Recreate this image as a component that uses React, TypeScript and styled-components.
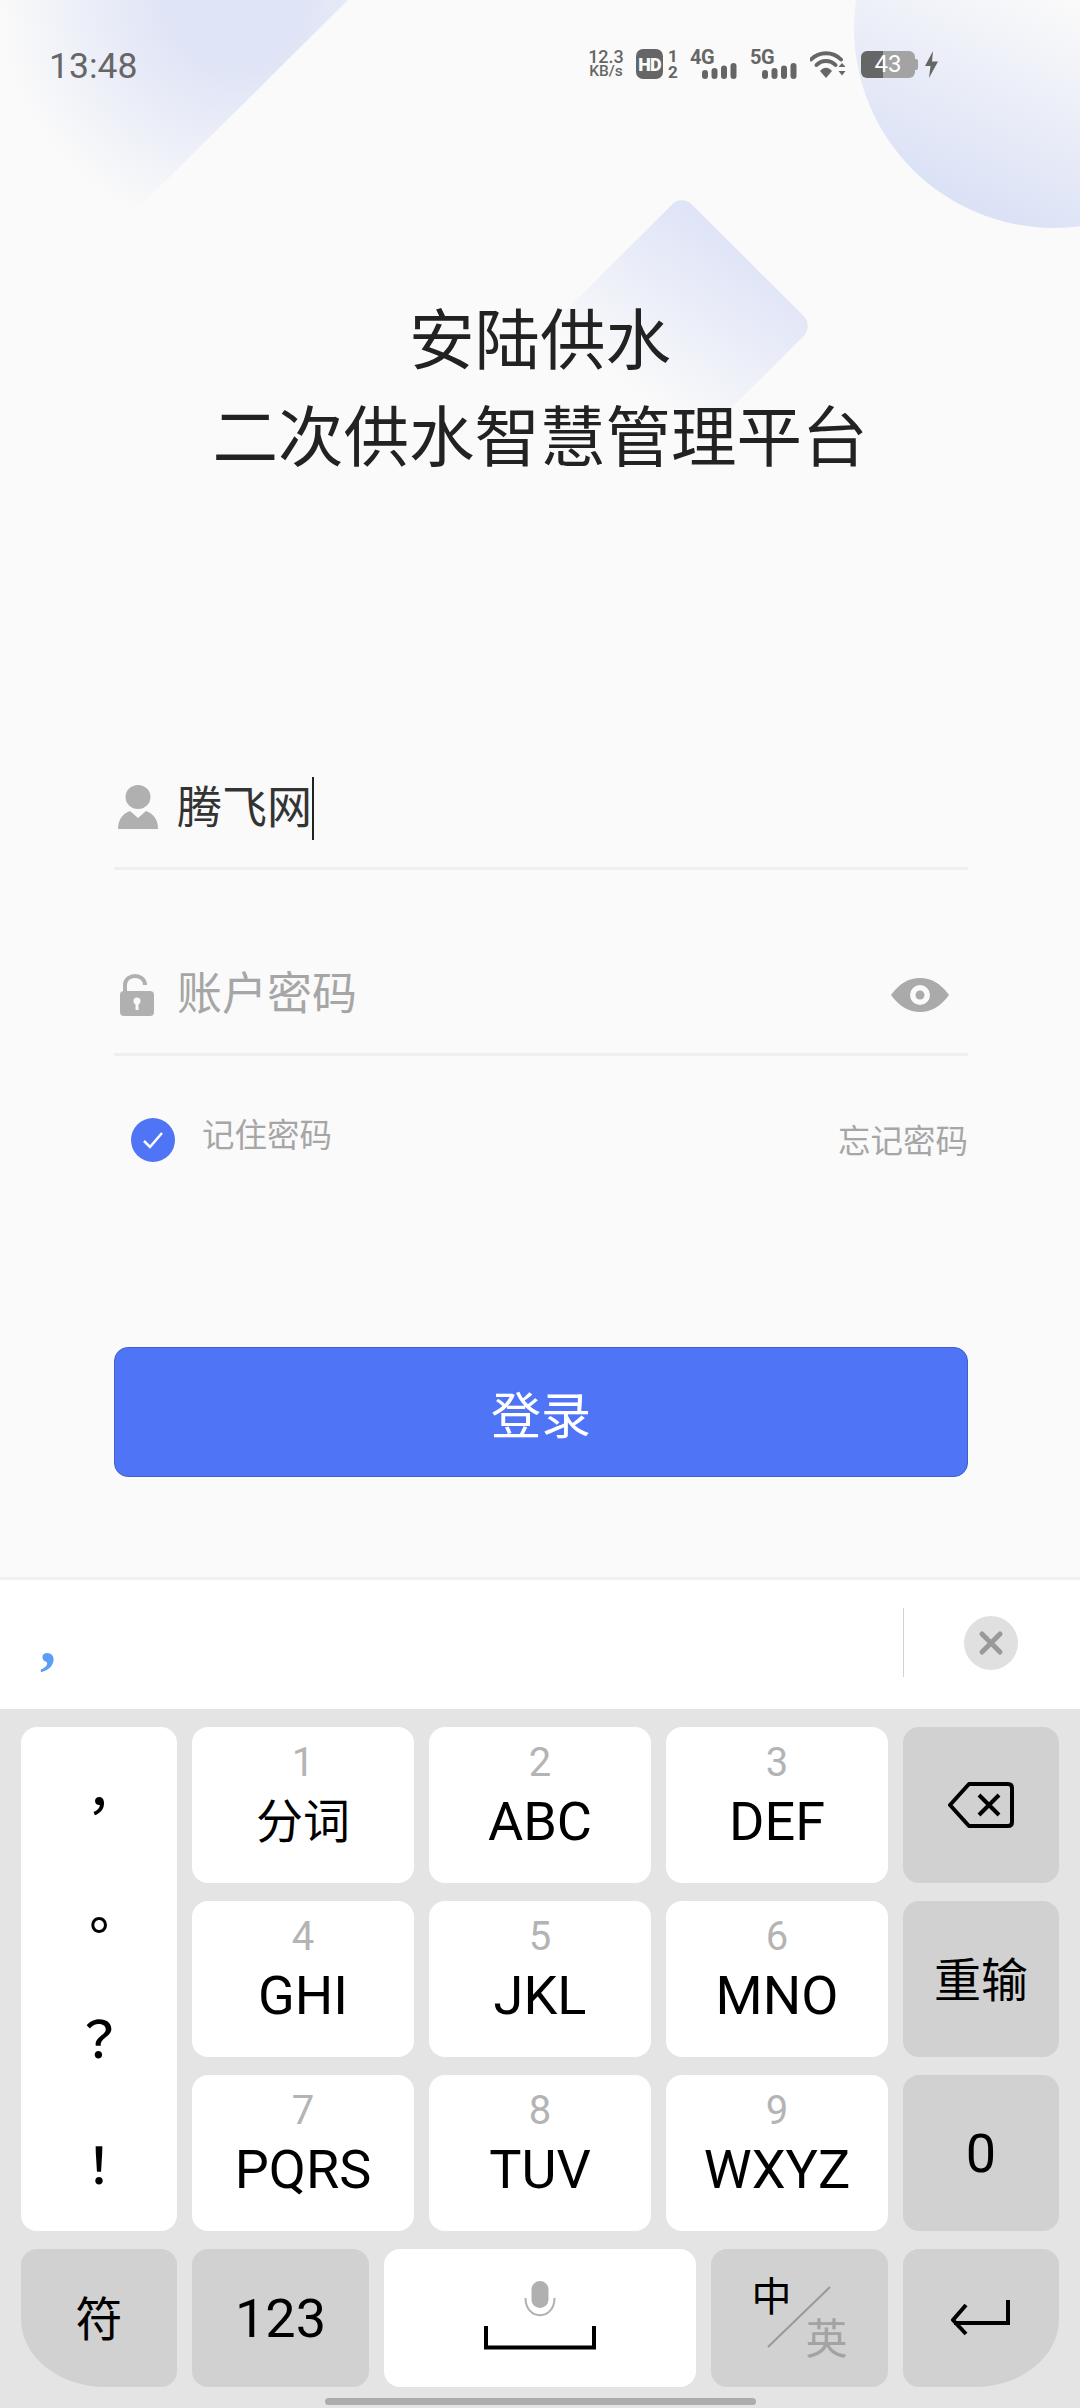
import React from "react";
import styled, { createGlobalStyle } from "styled-components";

const CJK = `Roboto, "Noto Sans CJK SC", sans-serif`;

const GlobalStyle = createGlobalStyle`
  html, body {
    margin: 0;
    padding: 0;
    background: #fafafa;
  }
  * {
    box-sizing: border-box;
  }
`;

const Page = styled.div`
  width: 1080px;
  height: 2408px;
  display: flex;
  flex-direction: column;
  overflow: hidden;
  font-family: ${CJK};
  background: #fafafa;
`;

const LoginScreen = styled.main`
  position: relative;
  flex: 1;
  overflow: hidden;
`;

/* background decoration */
const CornerShape = styled.div`
  position: absolute;
  left: 0;
  top: 0;
  width: 348px;
  height: 345px;
  clip-path: polygon(0 0, 100% 0, 0 100%);
  background: radial-gradient(circle 235px at 235px 0, #dfe4f6 28%, rgba(250, 250, 250, 0) 100%);
`;

const CircleShape = styled.div`
  position: absolute;
  left: 854px;
  top: -172px;
  width: 400px;
  height: 400px;
  border-radius: 50%;
  background: linear-gradient(25deg, #dce2f6 14%, #fafafa 56%);
`;

const DiamondShape = styled.div`
  position: absolute;
  left: 589px;
  top: 233px;
  width: 186px;
  height: 186px;
  border-radius: 14px;
  transform: rotate(45deg);
  background: linear-gradient(170deg, #dfe4f7 5%, rgba(250, 250, 250, 0) 88%);
`;

const Content = styled.div`
  position: relative;
  z-index: 1;
`;

/* status bar */
const StatusBar = styled.header`
  height: 128px;
  padding: 0 142px 0 49px;
  display: flex;
  align-items: center;
  justify-content: space-between;
  color: #666;
`;

const Clock = styled.span`
  padding-top: 3px;
  font-size: 35.5px;
  line-height: 40px;
  color: #666;
`;

const StatusIcons = styled.div`
  display: flex;
  align-items: center;
  height: 32px;
`;

const NetSpeed = styled.div`
  width: 36px;
  margin-right: 12px;
  margin-top: -2px;
  display: flex;
  flex-direction: column;
  align-items: center;
  font-weight: 500;
`;

const SpeedValue = styled.span`
  display: block;
  font-size: 18px;
  line-height: 16px;
`;

const SpeedUnit = styled.span`
  display: block;
  font-size: 15.5px;
  line-height: 13px;
`;

const HdBadge = styled.span`
  width: 27px;
  height: 30px;
  border-radius: 7px;
  background: #666;
  color: #fafafa;
  font-size: 18px;
  font-weight: 900;
  letter-spacing: -1px;
  display: flex;
  align-items: center;
  justify-content: center;
`;

const SimSlots = styled.span`
  width: 19px;
  margin-right: 8px;
  padding-left: 5px;
  display: flex;
  flex-direction: column;
  font-size: 17px;
  line-height: 16px;
  font-weight: 700;
`;

const Network = styled.div`
  position: relative;
  width: 47px;
  height: 30px;
  margin-right: 13px;
`;

const NetworkLabel = styled.span`
  position: absolute;
  left: 0;
  top: -1px;
  font-size: 20px;
  line-height: 18px;
  font-weight: 700;
  letter-spacing: -0.5px;
`;

const NetworkBars = styled.svg`
  position: absolute;
  right: 0;
  bottom: 0;
`;

const WifiIcon = styled.svg`
  margin-right: 15px;
`;

const Battery = styled.div`
  position: relative;
  width: 54px;
  height: 27px;
  border-radius: 6px;
  overflow: hidden;
  background: linear-gradient(90deg, #666 0 41%, #a3a3a3 41% 100%);
  color: #fff;
  font-size: 24px;
  line-height: 27px;
  text-align: center;
`;

const BatteryNub = styled.span`
  width: 3px;
  height: 11px;
  margin-right: 7px;
  border-radius: 0 2px 2px 0;
  background: #a3a3a3;
`;

/* title and form */
const Title = styled.h1`
  margin: 165px 0 0;
  font-size: 65.5px;
  line-height: 97px;
  font-weight: 400;
  color: #222;
  text-align: center;
`;

const Form = styled.form`
  margin-top: 197px;
  padding: 0 112px 0 114px;
`;

const Field = styled.div`
  height: 186px;
  padding: 66px 19px 0 4px;
  border-bottom: 3px solid #efeff2;
  display: flex;
  align-items: center;
  justify-content: space-between;
`;

const FieldMain = styled.div`
  display: flex;
  align-items: center;
`;

const FieldIcon = styled.svg<{ $lift?: number }>`
  width: 40px;
  margin-right: 19px;
  margin-top: ${(p) => -(p.$lift ?? 0)}px;
  flex: none;
`;

const FieldText = styled.span<{ $placeholder?: boolean }>`
  font-size: 45px;
  line-height: 63px;
  color: ${(p) => (p.$placeholder ? "#a6a6a6" : "#333")};
`;

const Caret = styled.span`
  width: 2px;
  height: 63px;
  background: #222;
`;

const Options = styled.div`
  margin-top: 62px;
  display: flex;
  align-items: flex-start;
  justify-content: space-between;
`;

const Remember = styled.label`
  padding-left: 17px;
  display: flex;
  align-items: flex-start;
  gap: 27px;
  font-size: 32.5px;
  line-height: 36px;
  color: #a6a6a6;
`;

const Check = styled.span`
  width: 44px;
  height: 44px;
  border-radius: 50%;
  background: #4f75f6;
  display: flex;
  align-items: center;
  justify-content: center;
`;

const Forgot = styled.a`
  font-size: 32.5px;
  line-height: 48px;
  color: #a6a6a6;
`;

const LoginButton = styled.button`
  display: block;
  width: 100%;
  height: 130px;
  margin-top: 181px;
  border: 1px solid #3f5fcc;
  border-radius: 14px;
  background: #4f75f6;
  color: #fff;
  font-family: inherit;
  font-size: 50px;
`;

/* keyboard */
const Keyboard = styled.section`
  flex: none;
  background: #e4e4e4;
`;

const CandidateBar = styled.div`
  height: 132px;
  border-top: 3px solid #f0f0f0;
  background: #fff;
  display: flex;
  align-items: flex-start;
  justify-content: space-between;
  padding: 25px 35px 0 40px;
`;

const Candidate = styled.span`
  font-family: "Liberation Serif", serif;
  font-size: 64px;
  line-height: 72px;
  font-weight: 700;
  color: #5b9ef6;
`;

const CandidateActions = styled.div`
  display: flex;
  align-items: flex-start;
  margin-top: 3px;
  margin-right: 27px;
`;

const Divider = styled.span`
  width: 1px;
  height: 69px;
  background: #d2d2d2;
`;

const CloseButton = styled.span`
  width: 54px;
  height: 54px;
  margin: 8px 0 0 60px;
  border-radius: 50%;
  background: #e0e0e0;
  display: flex;
  align-items: center;
  justify-content: center;
`;

const KeyGrid = styled.div`
  padding: 18px 21px 0;
  display: grid;
  grid-template-columns: 156px repeat(3, 222px) 156px;
  grid-template-rows: repeat(3, 156px);
  column-gap: 15px;
  row-gap: 18px;
`;

const BottomRow = styled.div`
  margin-top: 18px;
  padding: 0 21px;
  display: grid;
  grid-template-columns: 156px 177px 312px 177px 156px;
  grid-template-rows: 138px;
  column-gap: 15px;
`;

const Key = styled.div<{ $gray?: boolean; $corner?: "left" | "right" }>`
  border-radius: 16px;
  background: ${(p) => (p.$gray ? "#d1d1d1" : "#fff")};
  color: #000;
  display: flex;
  align-items: center;
  justify-content: center;
  font-size: 54px;
  ${(p) => p.$corner === "left" && "border-bottom-left-radius: 84px 68px;"}
  ${(p) => p.$corner === "right" && "border-bottom-right-radius: 84px 68px;"}
`;

const PunctuationKey = styled(Key)`
  grid-row: 1 / span 3;
  grid-column: 1;
  padding: 15px 0 9px;
  flex-direction: column;
  font-family: "Noto Sans CJK TC", sans-serif;
  font-size: 50px;
  font-weight: 500;
`;

const Punct = styled.span<{ $lift?: number }>`
  height: 120px;
  line-height: 120px;
  margin-top: ${(p) => -(p.$lift ?? 0)}px;
  margin-bottom: ${(p) => p.$lift ?? 0}px;
`;

const DigitKey = styled(Key)`
  flex-direction: column;
  justify-content: flex-start;
  padding-top: 16px;
`;

const Digit = styled.span`
  font-size: 40px;
  line-height: 40px;
  color: #b4b4b4;
`;

const Letters = styled.span<{ $cjk?: boolean }>`
  margin-top: 10px;
  line-height: 58px;
  font-size: ${(p) => (p.$cjk ? 47 : 54)}px;
`;

const CjkLabel = styled.span`
  font-size: 47px;
  margin-top: -6px;
`;

const LangKey = styled(Key)`
  position: relative;
  padding: 27px 0 24px;
  gap: 14px;
`;

const LangMain = styled.span`
  align-self: flex-start;
  font-size: 40px;
  line-height: 44px;
`;

const LangOther = styled.span`
  align-self: flex-end;
  font-size: 42px;
  line-height: 46px;
  color: #a3a3a3;
`;

const LangSlash = styled.svg`
  position: absolute;
  left: 56px;
  top: 37px;
`;

const SpaceIcon = styled.svg`
  margin-bottom: 5px;
`;

const HomeIndicator = styled.div`
  width: 431px;
  height: 7px;
  margin: 11px auto 3px;
  border-radius: 4px;
  background: #adadad;
`;

const digitKeys = [
  { digit: "1", label: "分词", cjk: true },
  { digit: "2", label: "ABC" },
  { digit: "3", label: "DEF" },
  { digit: "4", label: "GHI" },
  { digit: "5", label: "JKL" },
  { digit: "6", label: "MNO" },
  { digit: "7", label: "PQRS" },
  { digit: "8", label: "TUV" },
  { digit: "9", label: "WXYZ" },
];

const SignalBars = () => (
  <NetworkBars width="35" height="16" viewBox="0 0 35 16" fill="#666">
    <rect x="0" y="7" width="6" height="9" rx="3" />
    <rect x="9.5" y="5" width="6" height="11" rx="3" />
    <rect x="19" y="2.5" width="6" height="13.5" rx="3" />
    <rect x="28.5" y="0" width="6" height="16" rx="3" />
  </NetworkBars>
);

const renderDigitKey = (k: { digit: string; label: string; cjk?: boolean }) => (
  <DigitKey key={k.digit}>
    <Digit>{k.digit}</Digit>
    <Letters $cjk={k.cjk}>{k.label}</Letters>
  </DigitKey>
);

const App: React.FC = () => {
  return (
    <Page>
      <GlobalStyle />
      <LoginScreen>
        <CornerShape />
        <CircleShape />
        <DiamondShape />
        <Content>
          <StatusBar>
            <Clock>13:48</Clock>
            <StatusIcons>
              <NetSpeed>
                <SpeedValue>12.3</SpeedValue>
                <SpeedUnit>KB/s</SpeedUnit>
              </NetSpeed>
              <HdBadge>HD</HdBadge>
              <SimSlots>
                <span>1</span>
                <span>2</span>
              </SimSlots>
              <Network>
                <NetworkLabel>4G</NetworkLabel>
                <SignalBars />
              </Network>
              <Network>
                <NetworkLabel>5G</NetworkLabel>
                <SignalBars />
              </Network>
              <WifiIcon width="36" height="28" viewBox="0 0 36 28">
                <path d="M1 9.500 C9 1 23 1 31 9.500" fill="none" stroke="#666" strokeWidth="4" strokeLinecap="round" />
                <path d="M6.500 15 C11.500 9.500 20.500 9.500 25.500 15" fill="none" stroke="#666" strokeWidth="4" strokeLinecap="round" />
                <path d="M10 21 C13.500 16.500 18.500 16.500 22 21 L16 28 Z" fill="#666" />
                <path d="M28.500 17 L32 13 L35.500 17 Z M28.500 21 L35.500 21 L32 25.500 Z" fill="#666" />
              </WifiIcon>
              <Battery>43</Battery>
              <BatteryNub />
              <svg width="13" height="27" viewBox="0 0 13 27" fill="#666">
                <path d="M8 0 L0 15 L5.500 15 L4 27 L13 10.500 L7 10.500 Z" />
              </svg>
            </StatusIcons>
          </StatusBar>

          <Title>
            安陆供水
            <br />
            二次供水智慧管理平台
          </Title>

          <Form>
            <Field>
              <FieldMain>
                <FieldIcon $lift={4} height="44" viewBox="0 0 40 44" fill="#b0b0b0">
                  <ellipse cx="20" cy="12" rx="12.500" ry="12" />
                  <path d="M0 44 C0 35 4 29 12 26 L20 33 L28 26 C36 29 40 35 40 44 Z" />
                </FieldIcon>
                <FieldText>腾飞网</FieldText>
                <Caret />
              </FieldMain>
            </Field>
            <Field>
              <FieldMain>
                <FieldIcon height="42" viewBox="0 0 40 42">
                  <path d="M7 19 V11 C7 -1 27 -1 27 11" fill="none" stroke="#b0b0b0" strokeWidth="4" />
                  <rect x="2" y="17" width="34" height="25" rx="4" fill="#b0b0b0" />
                  <circle cx="19" cy="27" r="3.500" fill="#fafafa" />
                  <rect x="17.500" y="28" width="3" height="8" fill="#fafafa" />
                </FieldIcon>
                <FieldText $placeholder>账户密码</FieldText>
              </FieldMain>
              <svg width="58" height="34" viewBox="0 0 58 34">
                <path d="M0 17 C9 5 18 0 29 0 S49 5 58 17 C49 29 40 34 29 34 S9 29 0 17 Z" fill="#aaa" />
                <circle cx="29" cy="17" r="10" fill="#fafafa" />
                <circle cx="29" cy="17" r="4.500" fill="#aaa" />
              </svg>
            </Field>
            <Options>
              <Remember>
                <Check>
                  <svg width="24" height="20" viewBox="0 0 24 20">
                    <path d="M3 11 L9 17 L21 3" fill="none" stroke="#fff" strokeWidth="2.500" />
                  </svg>
                </Check>
                记住密码
              </Remember>
              <Forgot>忘记密码</Forgot>
            </Options>
            <LoginButton type="button">登录</LoginButton>
          </Form>
        </Content>
      </LoginScreen>

      <Keyboard>
        <CandidateBar>
          <Candidate>,</Candidate>
          <CandidateActions>
            <Divider />
            <CloseButton>
              <svg width="26" height="26" viewBox="0 0 26 26">
                <path d="M4 4 L22 22 M22 4 L4 22" stroke="#999" strokeWidth="5" strokeLinecap="round" />
              </svg>
            </CloseButton>
          </CandidateActions>
        </CandidateBar>

        <KeyGrid>
          <PunctuationKey>
            <Punct>，</Punct>
            <Punct>。</Punct>
            <Punct $lift={6}>？</Punct>
            <Punct>！</Punct>
          </PunctuationKey>
          {digitKeys.slice(0, 3).map(renderDigitKey)}
          <Key $gray>
            <svg width="66" height="46" viewBox="0 0 66 46">
              <path d="M21 2 H60 Q64 2 64 6 V40 Q64 44 60 44 H21 L2 23 Z" fill="none" stroke="#000" strokeWidth="4" strokeLinejoin="round" />
              <path d="M31 13 L51 33 M51 13 L31 33" stroke="#000" strokeWidth="4" />
            </svg>
          </Key>
          {digitKeys.slice(3, 6).map(renderDigitKey)}
          <Key $gray>
            <CjkLabel>重输</CjkLabel>
          </Key>
          {digitKeys.slice(6, 9).map(renderDigitKey)}
          <Key $gray>0</Key>
        </KeyGrid>

        <BottomRow>
          <Key $gray $corner="left">
            <CjkLabel>符</CjkLabel>
          </Key>
          <Key $gray>123</Key>
          <Key>
            <SpaceIcon width="112" height="69" viewBox="0 0 112 69">
              <rect x="47.500" y="0" width="17" height="27" rx="8.500" fill="#b0b0b0" />
              <path d="M41.500 17 C41.500 40 70.500 40 70.500 17" fill="none" stroke="#b0b0b0" strokeWidth="2" />
              <path d="M2 45 V66.500 H110 V45" fill="none" stroke="#000" strokeWidth="4" />
            </SpaceIcon>
          </Key>
          <LangKey $gray>
            <LangMain>中</LangMain>
            <LangOther>英</LangOther>
            <LangSlash width="66" height="62" viewBox="0 0 66 62">
              <path d="M63 1 L1 61" stroke="#999" strokeWidth="2" />
            </LangSlash>
          </LangKey>
          <Key $gray $corner="right">
            <svg width="60" height="36" viewBox="0 0 60 36">
              <path d="M57 0 V23 H3" fill="none" stroke="#000" strokeWidth="4" />
              <path d="M15 5 L2 20 L15 34" fill="none" stroke="#000" strokeWidth="4" />
            </svg>
          </Key>
        </BottomRow>
        <HomeIndicator />
      </Keyboard>
    </Page>
  );
};

export default App;
